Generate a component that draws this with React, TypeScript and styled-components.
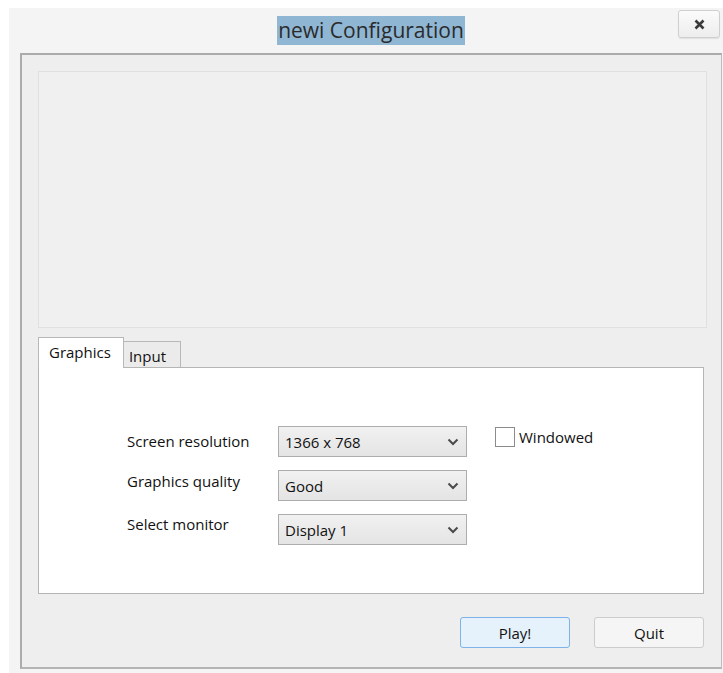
import { Fragment } from 'react'
import styled, { createGlobalStyle } from 'styled-components'

const GlobalStyle = createGlobalStyle`
  html, body {
    margin: 0;
    padding: 0;
    background: #ffffff;
  }
  body {
    font-family: 'Open Sans', 'Noto Sans', 'DejaVu Sans', sans-serif;
    color: #111111;
  }
`

const Window = styled.div`
  margin: 8px 0 0 9px;
  height: 665px;
  background: #f4f4f4;
  display: flex;
  flex-direction: column;
`

const TitleBar = styled.header`
  height: 45px;
  display: grid;
  grid-template-columns: 1fr auto 1fr;
  padding-left: 10px;
  box-sizing: border-box;
`

const Title = styled.h1`
  grid-column: 2;
  margin: 8px 0 0;
  height: 29px;
  padding: 0 1px;
  background: #8fb6d3;
  font-size: 21px;
  font-weight: 400;
  line-height: 29px;
  color: #2b2b2b;
`

const CloseButton = styled.button`
  grid-column: 3;
  justify-self: end;
  margin: 2px 3px 0 0;
  width: 42px;
  height: 28px;
  border: 1px solid #cfcfcf;
  border-radius: 3px;
  background: linear-gradient(#fbfbfb, #ededed);
  box-shadow: 0 1px 1px rgba(0, 0, 0, 0.08);
  display: flex;
  align-items: center;
  justify-content: center;
  padding: 0;
`

const Client = styled.main`
  flex: 1;
  margin: 0 1px 4px 11px;
  background: #eeeeee;
  border-top: 2px solid #ababab;
  border-left: 2px solid #ababab;
  border-right: 1px solid #bdbdbd;
  border-bottom: 2px solid #b4b4b4;
  padding: 16px 14px 0 16px;
  display: flex;
  flex-direction: column;
`

const Preview = styled.section`
  height: 255px;
  background: #f0f0f0;
  border: 1px solid #e0e0e0;
`

const TabStrip = styled.div`
  margin-top: 9px;
  display: flex;
  align-items: flex-end;
  height: 30px;
`

const Tab = styled.div<{ $active?: boolean }>`
  box-sizing: border-box;
  height: ${({ $active }) => ($active ? '31px' : '26px')};
  padding: ${({ $active }) => ($active ? '5px 12px 0 10px' : '5px 14px 0 5px')};
  background: ${({ $active }) => ($active ? '#ffffff' : '#ebebeb')};
  border: 1px solid #b8b8b8;
  border-bottom: none;
  border-left-width: ${({ $active }) => ($active ? '1px' : '0')};
  margin-bottom: ${({ $active }) => ($active ? '-1px' : '0')};
  position: relative;
  z-index: ${({ $active }) => ($active ? 1 : 0)};
  font-size: 15px;
  line-height: 18px;
`

const TabPane = styled.section`
  margin-right: 3px;
  height: 227px;
  background: #ffffff;
  border: 1px solid #b5b5b5;
  padding: 58px 0 0 88px;
  box-sizing: border-box;
  display: flex;
  align-items: flex-start;
`

const SettingsGrid = styled.div`
  display: grid;
  grid-template-columns: 151px 189px;
  grid-auto-rows: 30px;
  row-gap: 14px;
  align-items: start;
`

const Label = styled.span<{ $lift: number }>`
  font-size: 15px;
  line-height: 30px;
  margin-top: ${({ $lift }) => -$lift}px;
`

const Combo = styled.div`
  box-sizing: border-box;
  height: 31px;
  border: 1px solid #adadad;
  background: linear-gradient(#f1f1f1, #e4e4e4);
  display: flex;
  align-items: center;
  justify-content: space-between;
  padding: 0 7px 0 6px;
  font-size: 15px;
`

const CheckRow = styled.label`
  margin-left: 28px;
  margin-top: 1px;
  display: flex;
  align-items: center;
  gap: 4px;
  font-size: 15px;
`

const CheckBox = styled.span`
  width: 20px;
  height: 20px;
  box-sizing: border-box;
  border: 1px solid #8c8c8c;
  background: #ffffff;
`

const ButtonRow = styled.footer`
  margin-top: 23px;
  margin-right: 3px;
  display: flex;
  justify-content: flex-end;
  gap: 24px;
`

const PushButton = styled.button<{ $default?: boolean }>`
  width: 110px;
  height: 31px;
  border-radius: 3px;
  border: 1px solid ${({ $default }) => ($default ? '#7db3e8' : '#cccccc')};
  background: ${({ $default }) => ($default ? '#e5f1fb' : '#f5f5f5')};
  font-family: inherit;
  font-size: 15px;
  color: #111111;
  padding: 0;
`

const Chevron = () => (
  <svg width="12" height="8" viewBox="0 0 12 8">
    <path d="M1.5 1.5 L6 6 L10.5 1.5" fill="none" stroke="#4a4a4a" strokeWidth="2" />
  </svg>
)

const CloseGlyph = () => (
  <svg width="11" height="11" viewBox="0 0 11 11">
    <path d="M1.5 1.5 L9.5 9.5 M9.5 1.5 L1.5 9.5" stroke="#3a3a3a" strokeWidth="2.6" />
  </svg>
)

const settings = [
  { label: 'Screen resolution', value: '1366 x 768', lift: 0 },
  { label: 'Graphics quality', value: 'Good', lift: 4 },
  { label: 'Select monitor', value: 'Display 1', lift: 5 },
]

export default function App() {
  return (
    <>
      <GlobalStyle />
      <Window>
        <TitleBar>
          <Title>newi Configuration</Title>
          <CloseButton aria-label="Close">
            <CloseGlyph />
          </CloseButton>
        </TitleBar>
        <Client>
          <Preview />
          <TabStrip>
            <Tab $active>Graphics</Tab>
            <Tab>Input</Tab>
          </TabStrip>
          <TabPane>
            <SettingsGrid>
              {settings.map((s) => (
                <Fragment key={s.label}>
                  <Label $lift={s.lift}>{s.label}</Label>
                  <Combo>
                    <span>{s.value}</span>
                    <Chevron />
                  </Combo>
                </Fragment>
              ))}
            </SettingsGrid>
            <CheckRow>
              <CheckBox />
              Windowed
            </CheckRow>
          </TabPane>
          <ButtonRow>
            <PushButton $default>Play!</PushButton>
            <PushButton>Quit</PushButton>
          </ButtonRow>
        </Client>
      </Window>
    </>
  )
}
